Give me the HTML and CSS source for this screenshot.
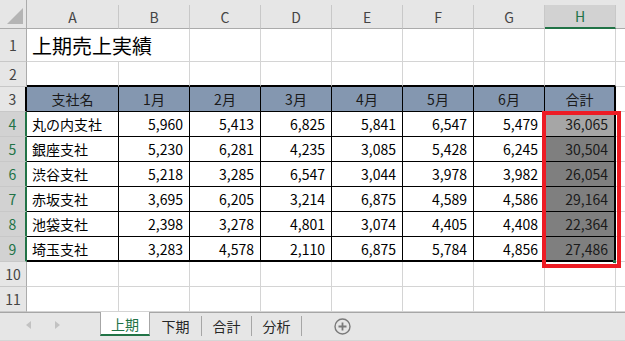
FILE: index.html
```html
<!DOCTYPE html>
<html lang="ja">
<head>
    <meta charset="UTF-8">
    <title>上期売上実績</title>
    <link rel="stylesheet" href="styles.css">
</head>
<body>

<!-- Worksheet grid -->
<div class="sheet">
    <div class="corner"><span class="corner-tri"></span></div>
    <div class="col-head">A</div>
    <div class="col-head">B</div>
    <div class="col-head">C</div>
    <div class="col-head">D</div>
    <div class="col-head">E</div>
    <div class="col-head">F</div>
    <div class="col-head">G</div>
    <div class="col-head sel">H</div>
    <div class="col-head last"></div>

    <!-- row 1 -->
    <div class="row-head">1</div>
    <div class="cell title span2">上期売上実績</div>
    <div class="cell"></div><div class="cell"></div><div class="cell"></div><div class="cell"></div>
    <div class="cell"></div><div class="cell"></div><div class="cell"></div>

    <!-- row 2 -->
    <div class="row-head">2</div>
    <div class="cell edge-top"></div><div class="cell edge-top"></div><div class="cell edge-top"></div><div class="cell edge-top"></div>
    <div class="cell edge-top"></div><div class="cell edge-top"></div><div class="cell edge-top"></div><div class="cell edge-top"></div>
    <div class="cell"></div>

    <!-- row 3 : table header -->
    <div class="row-head edge-left">3</div>
    <div class="cell tb th">支社名</div>
    <div class="cell tb th">1月</div>
    <div class="cell tb th">2月</div>
    <div class="cell tb th">3月</div>
    <div class="cell tb th">4月</div>
    <div class="cell tb th">5月</div>
    <div class="cell tb th">6月</div>
    <div class="cell tb th edge-right">合計</div>
    <div class="cell"></div>

    <!-- row 4 -->
    <div class="row-head sel">4</div>
    <div class="cell tb">丸の内支社</div>
    <div class="cell tb num">5,960</div>
    <div class="cell tb num">5,413</div>
    <div class="cell tb num">6,825</div>
    <div class="cell tb num">5,841</div>
    <div class="cell tb num">6,547</div>
    <div class="cell tb num">5,479</div>
    <div class="cell tb num total active edge-right">36,065</div>
    <div class="cell"></div>

    <!-- row 5 -->
    <div class="row-head sel">5</div>
    <div class="cell tb">銀座支社</div>
    <div class="cell tb num">5,230</div>
    <div class="cell tb num">6,281</div>
    <div class="cell tb num">4,235</div>
    <div class="cell tb num">3,085</div>
    <div class="cell tb num">5,428</div>
    <div class="cell tb num">6,245</div>
    <div class="cell tb num total edge-right">30,504</div>
    <div class="cell"></div>

    <!-- row 6 -->
    <div class="row-head sel">6</div>
    <div class="cell tb">渋谷支社</div>
    <div class="cell tb num">5,218</div>
    <div class="cell tb num">3,285</div>
    <div class="cell tb num">6,547</div>
    <div class="cell tb num">3,044</div>
    <div class="cell tb num">3,978</div>
    <div class="cell tb num">3,982</div>
    <div class="cell tb num total edge-right">26,054</div>
    <div class="cell"></div>

    <!-- row 7 -->
    <div class="row-head sel">7</div>
    <div class="cell tb">赤坂支社</div>
    <div class="cell tb num">3,695</div>
    <div class="cell tb num">6,205</div>
    <div class="cell tb num">3,214</div>
    <div class="cell tb num">6,875</div>
    <div class="cell tb num">4,589</div>
    <div class="cell tb num">4,586</div>
    <div class="cell tb num total edge-right">29,164</div>
    <div class="cell"></div>

    <!-- row 8 -->
    <div class="row-head sel">8</div>
    <div class="cell tb">池袋支社</div>
    <div class="cell tb num">2,398</div>
    <div class="cell tb num">3,278</div>
    <div class="cell tb num">4,801</div>
    <div class="cell tb num">3,074</div>
    <div class="cell tb num">4,405</div>
    <div class="cell tb num">4,408</div>
    <div class="cell tb num total edge-right">22,364</div>
    <div class="cell"></div>

    <!-- row 9 -->
    <div class="row-head sel">9</div>
    <div class="cell tb edge-bottom">埼玉支社</div>
    <div class="cell tb num edge-bottom">3,283</div>
    <div class="cell tb num edge-bottom">4,578</div>
    <div class="cell tb num edge-bottom">2,110</div>
    <div class="cell tb num edge-bottom">6,875</div>
    <div class="cell tb num edge-bottom">5,784</div>
    <div class="cell tb num edge-bottom">4,856</div>
    <div class="cell tb num total edge-right edge-bottom">27,486</div>
    <div class="cell"></div>

    <!-- row 10 -->
    <div class="row-head">10</div>
    <div class="cell"></div><div class="cell"></div><div class="cell"></div><div class="cell"></div>
    <div class="cell"></div><div class="cell"></div><div class="cell"></div><div class="cell"></div>
    <div class="cell"></div>

    <!-- row 11 -->
    <div class="row-head">11</div>
    <div class="cell"></div><div class="cell"></div><div class="cell"></div><div class="cell"></div>
    <div class="cell"></div><div class="cell"></div><div class="cell"></div><div class="cell"></div>
    <div class="cell"></div>

    <!-- highlight around the totals -->
    <div class="mark-box"></div>
    <div class="fill-handle"></div>
</div>

<!-- Sheet tabs -->
<div class="tabbar">
    <div class="nav">
        <svg width="5" height="8" viewBox="0 0 5 8"><path d="M5 0 L0 4 L5 8 Z" fill="#c2c2c2"/></svg>
        <svg width="5" height="8" viewBox="0 0 5 8"><path d="M0 0 L5 4 L0 8 Z" fill="#c2c2c2"/></svg>
    </div>
    <div class="tab active">上期</div>
    <div class="tab w51">下期</div>
    <div class="tab">合計</div>
    <div class="tab">分析</div>
    <div class="add">
        <svg width="17" height="17" viewBox="0 0 17 17">
            <circle cx="8.5" cy="8.5" r="7.5" fill="none" stroke="#7a7a7a" stroke-width="1.4"/>
            <path d="M8.5 4.5 V12.5 M4.5 8.5 H12.5" stroke="#7a7a7a" stroke-width="1.8"/>
        </svg>
    </div>
</div>

</body>
</html>
```

FILE: styles.css
```css
/* Page */
html, body {
    margin: 0;
    width: 625px;
    height: 341px;
    overflow: hidden;
}
body {
    font-family: "Noto Sans CJK JP", "Noto Sans", sans-serif;
    font-size: 14px;
    color: #000;
    background: #fff;
}

/* Worksheet grid */
.sheet {
    position: relative;
    display: grid;
    grid-template-columns: 27px 92px repeat(7, 71px) 1fr;
    grid-template-rows: 29px 33px repeat(10, 25px);
    background: #e6e6e6;
    overflow: hidden;
}
.corner {
    position: relative;
    border-right: 1px solid #ababab;
    border-bottom: 1px solid #ababab;
}
.corner-tri {
    position: absolute;
    right: 3px;
    bottom: 4px;
    width: 0;
    height: 0;
    border-left: 16px solid transparent;
    border-bottom: 16px solid #b4b4b4;
}
.col-head {
    align-self: end;
    height: 24px;
    display: flex;
    align-items: center;
    justify-content: center;
    color: #444;
    border-right: 1px solid #c8c8c8;
    border-bottom: 1px solid #ababab;
    box-sizing: border-box;
}
.col-head.sel {
    background: #d2d2d2;
    color: #217346;
    border-bottom: 2px solid #217346;
}
.col-head.last {
    border-right: none;
}
.row-head {
    display: flex;
    align-items: center;
    justify-content: center;
    color: #444;
    border-right: 1px solid #ababab;
    border-bottom: 1px solid #c8c8c8;
}
.row-head.edge-left {
    border-right: 2px solid #000;
}
.row-head.sel {
    background: #d2d2d2;
    color: #217346;
    border-right: 2px solid #217346;
}

/* Cells */
.cell {
    display: flex;
    align-items: center;
    padding: 0 5px;
    white-space: nowrap;
    background: #fff;
    border-right: 1px solid #d4d4d4;
    border-bottom: 1px solid #d4d4d4;
}
.title {
    font-size: 20px;
    padding-top: 1px;
}
.span2 {
    grid-column: span 2;
}
.tb {
    border-right-color: #000;
    border-bottom-color: #000;
}
.th {
    justify-content: center;
    background: #8497b0;
    color: #1a1a1a;
}
.num {
    justify-content: flex-end;
    padding-right: 6px;
}
.total {
    background: #7f7f7f;
    color: #1a1a1a;
}
.total.active {
    background: #a6a6a6;
}
.edge-top {
    border-bottom: 2px solid #000;
}
.edge-right {
    border-right: 2px solid #000;
}
.edge-bottom {
    border-bottom: 2px solid #000;
}

/* Overlays on the selection */
.mark-box {
    position: absolute;
    left: 542px;
    top: 111px;
    width: 79px;
    height: 157px;
    border: 4px solid #ed1c24;
    box-sizing: border-box;
}
.fill-handle {
    position: absolute;
    left: 613px;
    top: 260px;
    width: 3px;
    height: 3px;
    background: #217346;
}

/* Sheet tabs */
.tabbar {
    display: flex;
    align-items: flex-start;
    height: 29px;
    background: #e6e6e6;
    box-shadow: inset 0 1px #a6a6a6, inset 0 -1px #d6d6d6;
}
.nav {
    width: 100px;
    height: 26px;
    display: flex;
    align-items: center;
    gap: 24px;
    padding-left: 26px;
    box-sizing: border-box;
}
.tab {
    width: 49px;
    height: 20px;
    margin-top: 4px;
    display: flex;
    align-items: center;
    justify-content: center;
    color: #262626;
    border-right: 1px solid #a6a6a6;
}
.tab.w51 {
    width: 51px;
}
.tab.active {
    width: 50px;
    height: 24px;
    margin-top: 0;
    padding-top: 1px;
    box-sizing: border-box;
    background: #fff;
    color: #217346;
    border-left: 1px solid #a6a6a6;
    border-right: 1px solid #a6a6a6;
    border-bottom: 2px solid #217346;
}
.add {
    margin-left: 32px;
    margin-top: 6px;
    height: 17px;
}
```
